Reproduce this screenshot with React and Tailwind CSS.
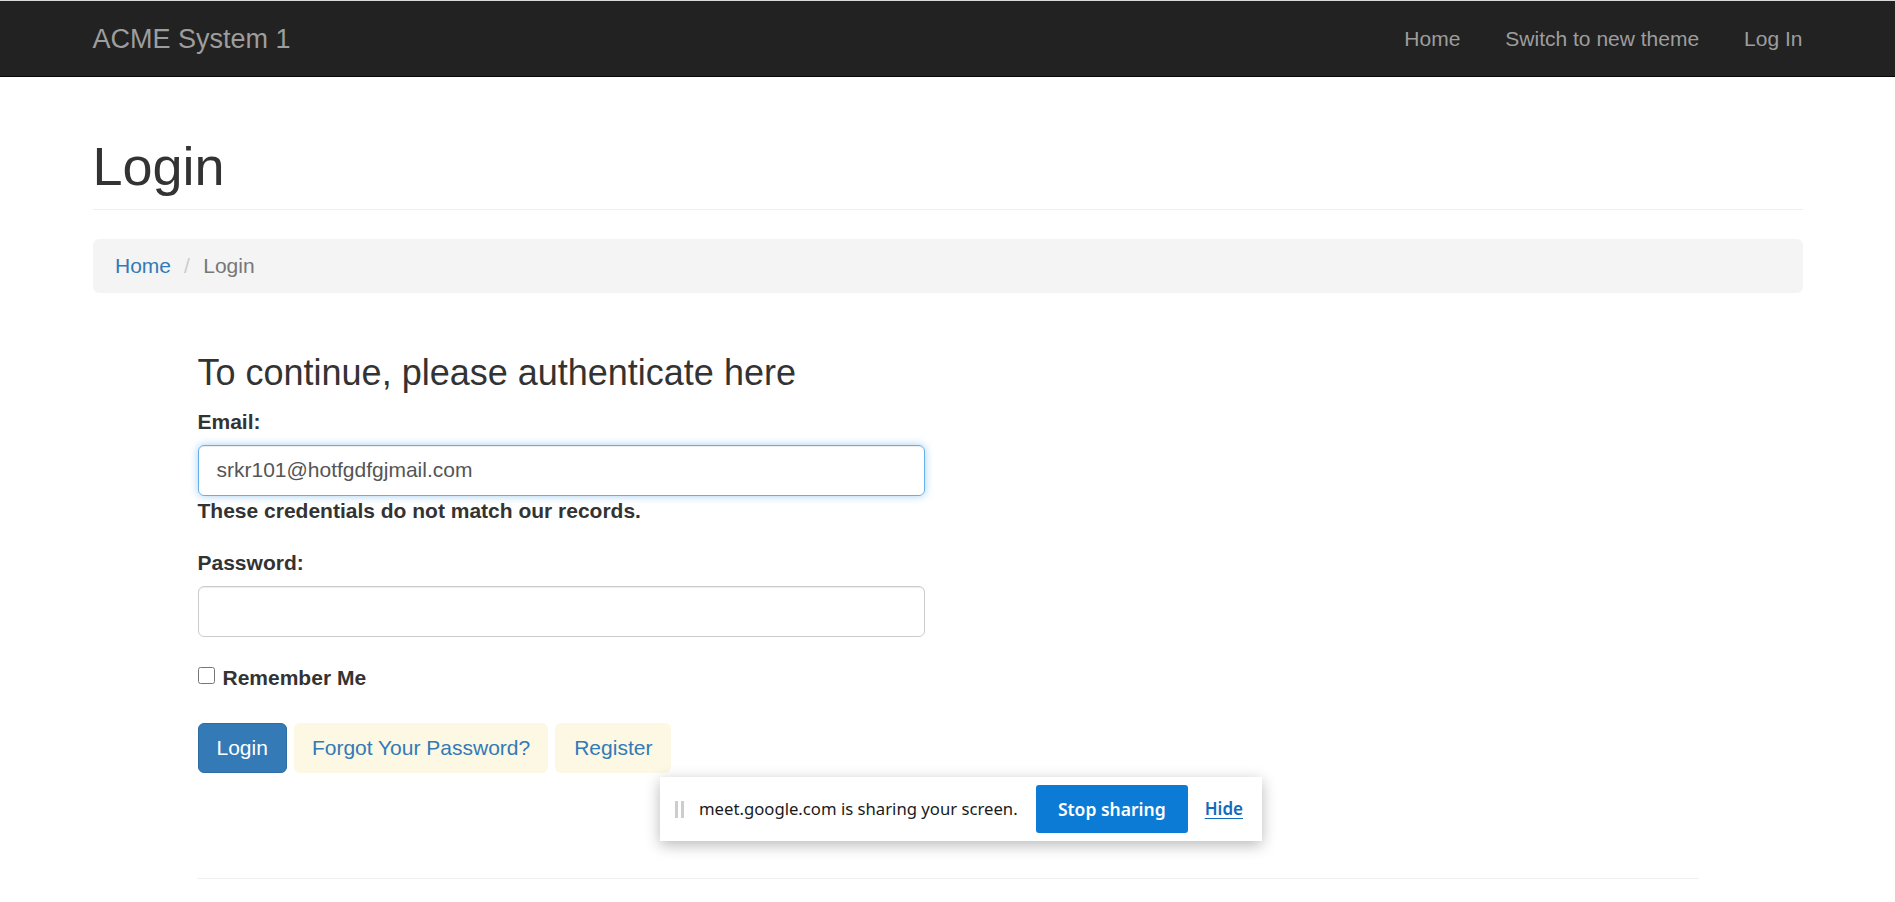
export default function App() {
  return (
    <div className="min-h-screen bg-white font-['Liberation_Sans',Arial,sans-serif] text-[21px] leading-[30px] text-[#333] relative">
      <div className="h-px bg-[#d9d9d9]" />
      <nav className="bg-[#222] border-b border-[#080808]">
        <div className="w-[1755px] mx-auto px-[22.5px] h-[75px] flex items-center justify-between">
          <a className="text-[27px] leading-[30px] text-[#9d9d9d]">ACME System 1</a>
          <ul className="flex mr-[-22.5px]">
            <li className="px-[22.5px] text-[#9d9d9d]">Home</li>
            <li className="px-[22.5px] text-[#9d9d9d]">Switch to new theme</li>
            <li className="px-[22.5px] text-[#9d9d9d]">Log In</li>
          </ul>
        </div>
      </nav>

      <div className="w-[1755px] mx-auto px-[22.5px]">
        <div className="mt-[60px] pb-[13px] border-b border-[#eee]">
          <h1 className="text-[54px] leading-[59.4px] font-normal">Login</h1>
        </div>

        <ol className="mt-[29px] bg-[#f4f4f4] rounded-[6px] px-[22.5px] py-[12px] flex items-center">
          <li className="text-[#337ab7]">Home</li>
          <li className="text-[#ccc] pl-[13px] pr-[7.5px]">/&nbsp;</li>
          <li className="text-[#777]">Login</li>
        </ol>

        <div className="w-[1500px] mx-auto">
          <div className="w-[727.5px]">
            <h3 className="mt-[60px] mb-[14px] text-[36px] leading-[39.6px] font-normal">
              To continue, please authenticate here
            </h3>
            <div className="mb-[22.5px]">
              <label className="block font-bold mb-[7.5px]">Email:</label>
              <div className="h-[51px] w-full px-[18px] flex items-center border border-[#66afe9] rounded-[6px] shadow-[inset_0_1px_1px_rgba(0,0,0,0.075),0_0_8px_rgba(102,175,233,0.6)] text-[#555]">
                srkr101@hotfgdfgjmail.com
              </div>
              <div className="font-bold">These credentials do not match our records.</div>
            </div>
            <div className="mb-[26px]">
              <label className="block font-bold mb-[7.5px]">Password:</label>
              <div className="h-[51px] w-full border border-[#ccc] rounded-[6px] shadow-[inset_0_1px_1px_rgba(0,0,0,0.075)]" />
            </div>
            <div className="flex items-start font-bold">
              <input type="checkbox" className="w-[17px] h-[17px] m-0 mr-[8px] mt-[4px]" />
              <span>Remember Me</span>
            </div>
            <div className="mt-[30px] flex gap-[7px]">
              <button className="h-[50px] px-[18px] bg-[#337ab7] border border-[#2e6da4] rounded-[6px] text-white text-[21px]">
                Login
              </button>
              <button className="h-[50px] px-[17px] bg-[#fcf8e3] border border-transparent rounded-[6px] text-[#337ab7] text-[21px]">
                Forgot Your Password?
              </button>
              <button className="h-[50px] px-[18px] bg-[#fcf8e3] border border-transparent rounded-[6px] text-[#337ab7] text-[21px]">
                Register
              </button>
            </div>
          </div>
          <div className="mt-[105px] border-t border-[#eee]" />
        </div>
      </div>

      <div className="absolute left-[660px] top-[777px] w-[602px] h-[64px] bg-white shadow-[0_4px_14px_rgba(0,0,0,0.28)] flex items-center font-['Noto_Sans',sans-serif]">
        <div className="ml-[15px] flex gap-[3px]">
          <div className="w-[3px] h-[17px] bg-[#cdcdcd]" />
          <div className="w-[3px] h-[17px] bg-[#cdcdcd]" />
        </div>
        <span className="ml-[15px] text-[16.7px] leading-[20px] text-[#1a1a1a]">meet.google.com is sharing your screen.</span>
        <div className="ml-auto flex items-center mr-[19px]">
          <button className="w-[152px] h-[48px] bg-[#0c7bd5] rounded-[3px] text-white text-[17.5px] font-semibold">
            Stop sharing
          </button>
          <a className="ml-[17px] text-[17px] text-[#0f6cbd] underline underline-offset-[3px] font-semibold">Hide</a>
        </div>
      </div>
    </div>
  );
}
